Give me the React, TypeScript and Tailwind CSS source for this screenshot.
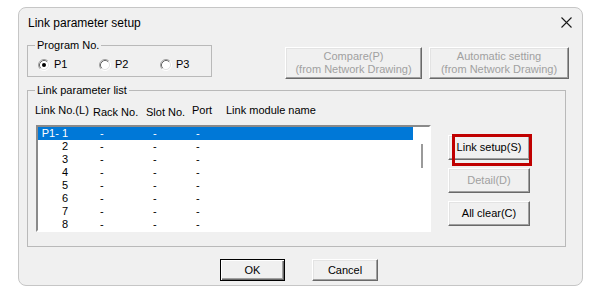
import React from "react";

const ROWS = ["1", "2", "3", "4", "5", "6", "7", "8"];

function Radio({ checked }: { checked?: boolean }) {
  return (
    <svg width="12" height="12" viewBox="0 0 12 12" className="shrink-0">
      <circle cx="6" cy="6" r="4.5" fill="#ffffff" />
      <path d="M2.11 9.89 A5.5 5.5 0 0 1 9.89 2.11" fill="none" stroke="#a0a0a0" strokeWidth="1" />
      <path d="M2.82 9.18 A4.5 4.5 0 0 1 9.18 2.82" fill="none" stroke="#696969" strokeWidth="1" />
      <path d="M9.89 2.11 A5.5 5.5 0 0 1 2.11 9.89" fill="none" stroke="#ffffff" strokeWidth="1" />
      <path d="M9.18 2.82 A4.5 4.5 0 0 1 2.82 9.18" fill="none" stroke="#e3e3e3" strokeWidth="1" />
      {checked && <circle cx="6" cy="6" r="2" fill="#000000" />}
    </svg>
  );
}

function RadioItem({ label, checked, last }: { label: string; checked?: boolean; last?: boolean }) {
  return (
    <div className={`flex items-center gap-[4px] h-[13px] ${last ? "" : "w-[61px]"}`}>
      <Radio checked={checked} />
      <span className="leading-[13px]">{label}</span>
    </div>
  );
}

// classic 3D push button
function WinButton({
  children,
  disabled,
  isDefault,
  className,
}: {
  children: React.ReactNode;
  disabled?: boolean;
  isDefault?: boolean;
  className: string;
}) {
  const edge = isDefault
    ? "border border-[#000000] shadow-[inset_1px_1px_0_#ffffff,inset_-1px_-1px_0_#696969,inset_-2px_-2px_0_#a0a0a0]"
    : "border border-t-[#ffffff] border-l-[#ffffff] border-r-[#696969] border-b-[#696969] shadow-[inset_-1px_-1px_0_#a0a0a0,inset_1px_1px_0_#e3e3e3]";
  return (
    <div
      className={`${className} ${edge} flex flex-col items-center justify-center bg-[#f0f0f0] text-[11px] leading-[13px] ${
        disabled ? "text-[#a0a0a0]" : "text-black"
      }`}
    >
      {children}
    </div>
  );
}

export default function App() {
  return (
    <div className="w-[606px] h-[308px] bg-white pt-[7px] pl-[18px] font-['Liberation_Sans',Arial,sans-serif] text-black">
      <div className="w-[565px] h-[279px] rounded-[8px] border border-[#c6c6c6] bg-[#f0f0f0] flex flex-col">
        {/* title bar */}
        <div className="h-[28px] flex items-center justify-between pl-[9px] pr-[10px]">
          <span className="text-[12px] leading-[14px] mt-[1px]">Link parameter setup</span>
          <svg width="11" height="11" viewBox="0 0 11 11">
            <path d="M0.5 0.5 L10.5 10.5 M10.5 0.5 L0.5 10.5" stroke="#1a1a1a" strokeWidth="1.1" />
          </svg>
        </div>

        {/* top row: program no + compare buttons */}
        <div className="flex items-start mt-[3px]">
          <fieldset className="ml-[8px] w-[185px] min-w-0 h-[38px] border border-[#b9b9b9] text-[11px]">
            <legend className="ml-[7px] px-[2px] leading-[13px]">Program No.</legend>
            <div className="flex pl-[10px] mt-[6px]">
              <RadioItem label="P1" checked />
              <RadioItem label="P2" />
              <RadioItem label="P3" last />
            </div>
          </fieldset>
          <div className="flex gap-[7px] ml-[73px] mt-[8px]">
            <WinButton disabled className="w-[137px] h-[32px]">
              <span>Compare(P)</span>
              <span>(from Network Drawing)</span>
            </WinButton>
            <WinButton disabled className="w-[140px] h-[32px]">
              <span>Automatic setting</span>
              <span>(from Network Drawing)</span>
            </WinButton>
          </div>
        </div>

        {/* link parameter list */}
        <fieldset className="ml-[8px] mt-[5px] w-[539px] min-w-0 h-[163px] border border-[#b9b9b9] text-[11px]">
          <legend className="ml-[7px] px-[2px] leading-[13px]">Link parameter list</legend>
          <div className="flex h-[13px] leading-[13px] mt-[7px] ml-[7px]">
            <span className="w-[58px]">Link No.(L)</span>
            <span className="w-[53px] mt-[2px]">Rack No.</span>
            <span className="w-[46px] mt-[2px]">Slot No.</span>
            <span className="w-[34px]">Port</span>
            <span>Link module name</span>
          </div>
          <div className="flex items-start mt-[8px] ml-[8px]">
            <div className="w-[395px] h-[107px] flex border-2 border-t-[#8a8a8a] border-l-[#8a8a8a] border-r-[#ffffff] border-b-[#ffffff] bg-white">
              <div className="w-[375px] flex flex-col">
                {ROWS.map((n, i) => (
                  <div
                    key={n}
                    className={`h-[13px] leading-[13px] flex ${i === 0 ? "bg-[#0078d7] text-white" : "text-black"}`}
                  >
                    <span className="w-[30px] text-right">{i === 0 ? "P1- 1" : n}</span>
                    <span className="w-[32px]" />
                    <span className="w-[53px]">-</span>
                    <span className="w-[43px]">-</span>
                    <span>-</span>
                  </div>
                ))}
              </div>
              <div className="flex-1 pl-[8px] pt-[17px]">
                <div className="w-[2px] h-[24px] bg-[#9a9a9a]" />
              </div>
            </div>
            <div className="flex flex-col gap-[8px] ml-[17px] mt-[10px]">
              <div className="relative">
                <WinButton className="w-[82px] h-[25px]">Link setup(S)</WinButton>
                <div className="absolute left-[4px] top-[-1px] w-[80px] h-[32px] border-[3px] border-[#c00000]" />
              </div>
              <WinButton disabled className="w-[82px] h-[25px]">Detail(D)</WinButton>
              <WinButton className="w-[82px] h-[25px]">All clear(C)</WinButton>
            </div>
          </div>
        </fieldset>

        {/* OK / Cancel */}
        <div className="flex mt-[12px] ml-[201px] gap-[27px]">
          <WinButton isDefault className="w-[65px] h-[22px]">OK</WinButton>
          <WinButton className="w-[66px] h-[22px]">Cancel</WinButton>
        </div>
      </div>
    </div>
  );
}
